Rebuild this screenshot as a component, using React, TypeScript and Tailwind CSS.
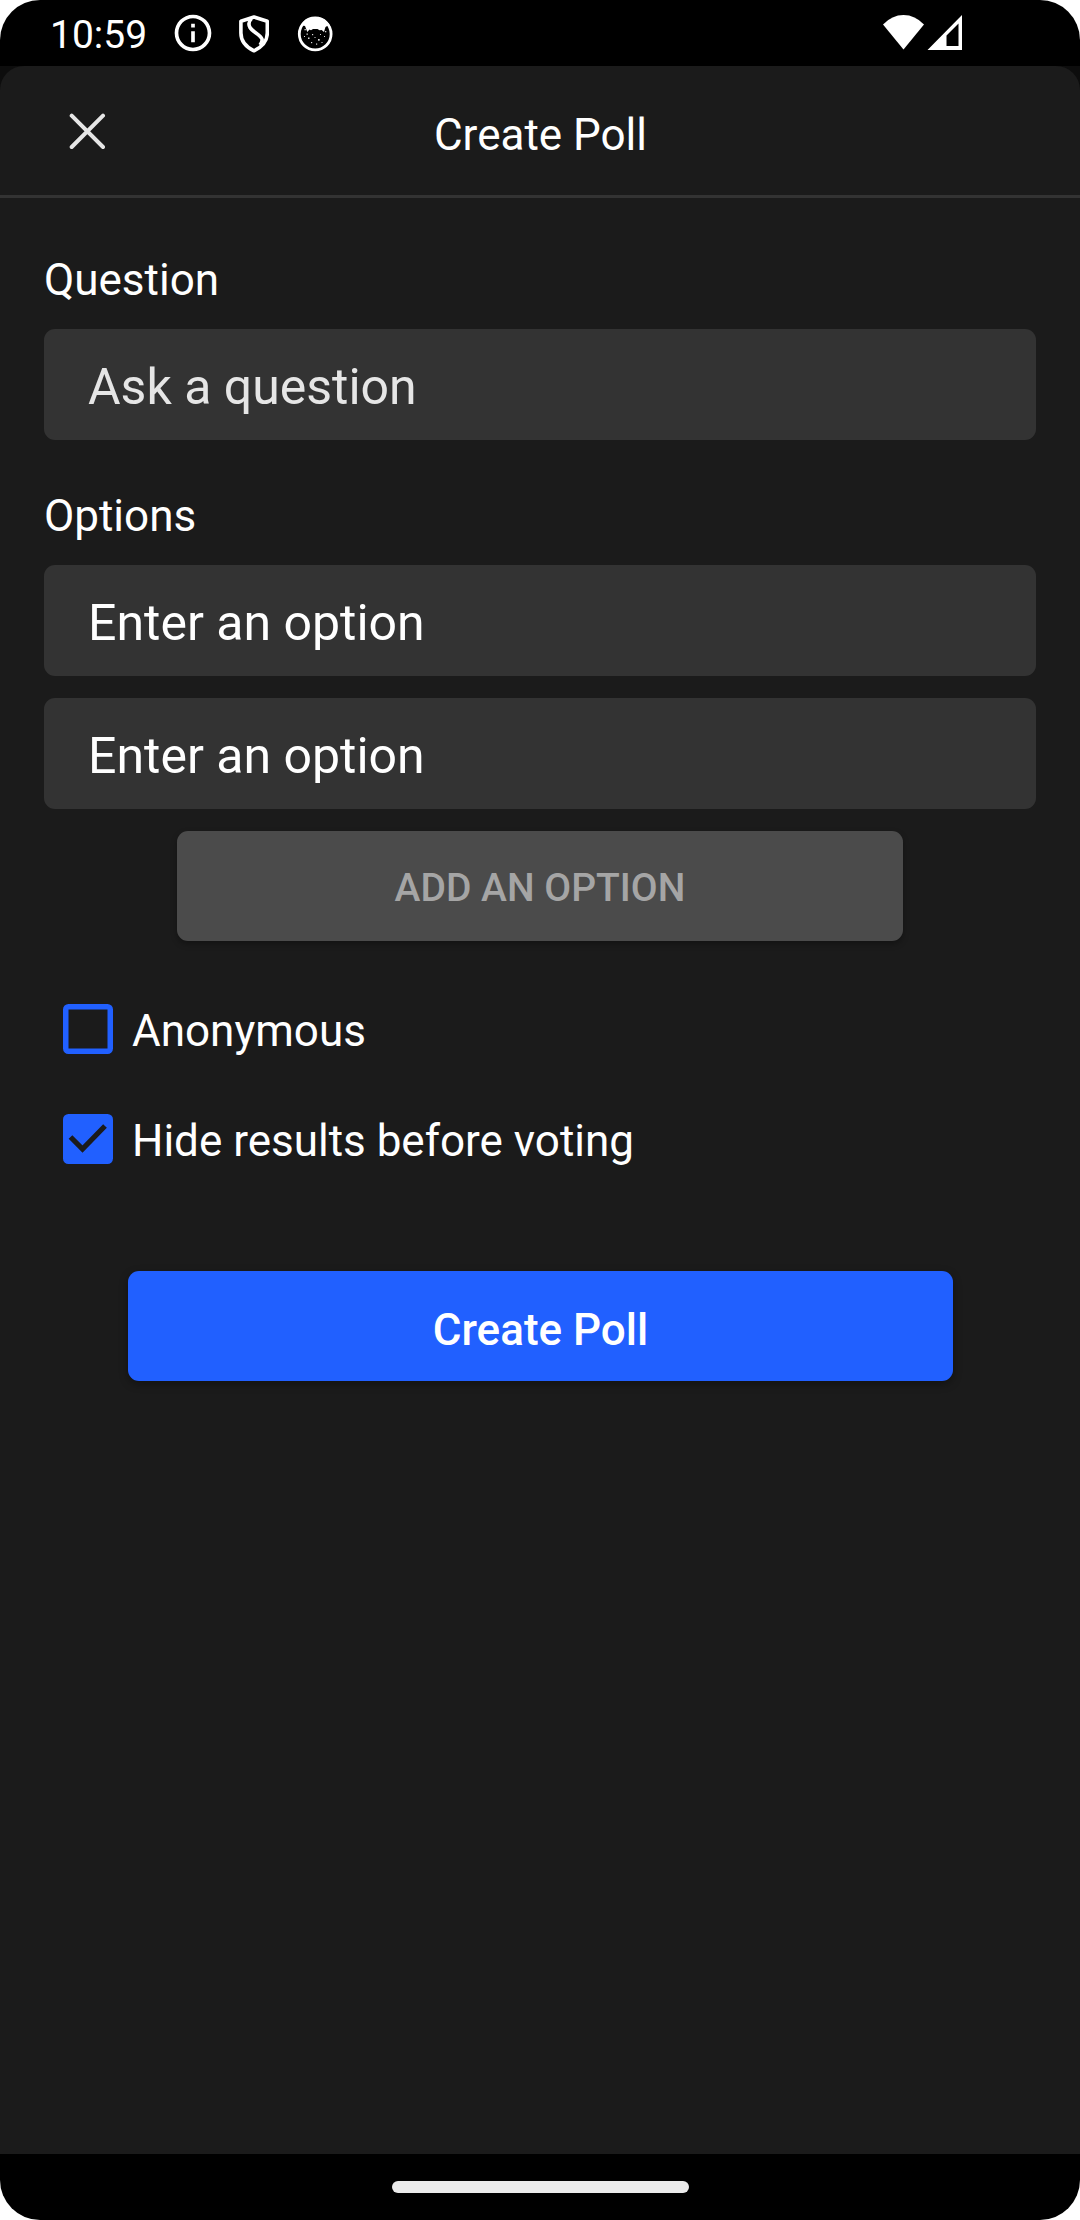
import { useState } from 'react';

function InfoIcon() {
  return (
    <svg width="44" height="44" viewBox="0 0 24 24" fill="#fff">
      <path d="M11 7h2v2h-2zm0 4h2v6h-2zm1-9C6.48 2 2 6.48 2 12s4.48 10 10 10 10-4.48 10-10S17.52 2 12 2zm0 18c-4.41 0-8-3.59-8-8s3.59-8 8-8 8 3.59 8 8-3.59 8-8 8z" />
    </svg>
  );
}

function ShieldIcon() {
  return (
    <svg width="30" height="38" viewBox="0 0 30 38" fill="none" stroke="#fff" strokeLinejoin="round">
      <path d="M15 2 L28.300 6.300 V18 C28.300 26 23 32 15 35.800 C7 32 1.900 26 1.900 18 V6.300 Z" strokeWidth="3.6" />
      <path d="M12.500 3.500 C10 6 9.300 9.500 11 12.500 C13.500 17 21.500 19.500 23 24 C23.500 26 22.500 28 21 30" strokeWidth="3.6" />
    </svg>
  );
}

function CatIcon() {
  return (
    <svg width="36" height="36" viewBox="0 0 36 36" fill="#fff">
      <circle cx="18.200" cy="17.900" r="15.900" fill="none" stroke="#fff" strokeWidth="2.800" />
      <path d="M3 11 C6 4 12 1 18 1 C24 1 31 4 33.500 11 L31 9.500 L28.500 11 L28 12.500 L27 16 L24.700 14 L22.500 14.300 L20.500 13 L16 13 L14 14.300 L12.500 13.600 L10.300 16 L9 12.500 L8 10 L5.700 9.500 Z" />
      <g opacity="0.85">
        <rect x="7.500" y="13" width="1.300" height="1.300" />
        <rect x="9.500" y="17.500" width="1.300" height="1.300" />
        <rect x="7" y="20" width="1" height="1" />
        <rect x="11" y="21.500" width="1.500" height="1.500" />
        <rect x="15" y="18" width="1.200" height="1.200" />
        <rect x="17.500" y="21" width="1" height="1" />
        <rect x="21" y="23" width="1.700" height="1.700" />
        <rect x="23" y="18" width="1" height="1" />
        <rect x="28" y="15" width="1.300" height="1.300" />
        <rect x="27" y="20" width="1" height="1" />
        <rect x="14" y="26" width="1.200" height="1.200" />
        <rect x="19" y="27.500" width="1.200" height="1.200" />
        <rect x="24.500" y="26" width="1" height="1" />
      </g>
    </svg>
  );
}

function StatusBar() {
  return (
    <div className="flex h-[66px] shrink-0 items-start pl-[50px] pr-[117px]">
      <span className="mt-3 w-[121px] text-[39px] leading-[46px]">10:59</span>
      <div className="mt-[11px]">
        <InfoIcon />
      </div>
      <div className="ml-6 mt-[14.500px]">
        <ShieldIcon />
      </div>
      <div className="ml-7 mt-[15.500px]">
        <CatIcon />
      </div>
      <svg className="ml-auto mt-[15px]" width="80" height="35" viewBox="0 0 80 35" fill="#fff">
        <path d="M0 9.500 Q9 0 20.500 0 Q32 0 41 9.500 L20.500 34.500 Z" />
        <path
          fillRule="evenodd"
          d="M44.500 35 L79 0 V35 Z M63.500 31 H75.500 V8.500 L63.500 20.500 Z"
        />
      </svg>
    </div>
  );
}

function Header() {
  return (
    <header className="grid h-[132px] grid-cols-[160px_1fr_160px] items-start border-b-[3px] border-[#333333]">
      <button aria-label="Close" className="ml-[69px] mt-[47px] w-9">
        <svg width="37" height="37" viewBox="0 0 37 37" stroke="#e6e6e6" strokeWidth="4" strokeLinecap="round">
          <path d="M2.700 2.700 L34 34 M34 2.700 L2.700 34" />
        </svg>
      </button>
      <h1 className="mt-[43px] pl-px text-center text-[44px] leading-[52px]">Create Poll</h1>
    </header>
  );
}

function Field({ placeholder, muted }: { placeholder: string; muted?: boolean }) {
  return (
    <div
      className={`flex h-[111px] items-center rounded-[11px] bg-[#333333] px-11 pt-[5px] text-[50px] leading-[58px] ${
        muted ? 'text-[#e6e6e6]' : 'text-white'
      }`}
    >
      {placeholder}
    </div>
  );
}

function CheckRow({ label, initial }: { label: string; initial: boolean }) {
  const [on, setOn] = useState(initial);
  return (
    <button
      role="checkbox"
      aria-checked={on}
      onClick={() => setOn(!on)}
      className="flex h-[110px] items-center pl-[19px] text-left"
    >
      <svg width="50" height="50" viewBox="0 0 50 50">
        {on ? (
          <>
            <rect width="50" height="50" rx="5.500" fill="#2160ff" />
            <path d="M7.500 23 L19.500 35 L42 12" fill="none" stroke="#1b1b1b" strokeWidth="5.200" />
          </>
        ) : (
          <rect x="2.750" y="2.750" width="44.500" height="44.500" rx="2.750" fill="none" stroke="#2160ff" strokeWidth="5.500" />
        )}
      </svg>
      <span className="ml-[19px] mt-1 text-[44px] leading-[52px]">{label}</span>
    </button>
  );
}

export default function App() {
  return (
    <div className="h-[2220px] w-[1080px] bg-white">
      <div className="flex h-full flex-col overflow-hidden rounded-[40px] bg-black font-['Roboto',sans-serif] text-white">
        <StatusBar />
        <div className="flex-1 bg-[#0d0d0d]">
          <div className="h-full rounded-t-[24px] bg-[#1b1b1b]">
            <Header />
            <main className="flex flex-col px-11 pt-14">
              <h2 className="text-[44px] leading-[52px]">Question</h2>
              <div className="mt-[23px]">
                <Field placeholder="Ask a question" muted />
              </div>
              <h2 className="mt-[50px] text-[44px] leading-[52px]">Options</h2>
              <div className="mt-[23px] flex flex-col gap-[22px]">
                <Field placeholder="Enter an option" />
                <Field placeholder="Enter an option" />
                <button className="ml-[133px] flex h-[110px] w-[726px] items-center justify-center rounded-[11px] bg-[#4b4b4b] pt-1 text-[39px] font-medium leading-[46px] text-[#a5a5a5] shadow-[0_3px_6px_rgba(0,0,0,0.3)]">
                  ADD AN OPTION
                </button>
              </div>
              <div className="mt-[33px] flex flex-col">
                <CheckRow label="Anonymous" initial={false} />
                <CheckRow label="Hide results before voting" initial={true} />
              </div>
              <button className="ml-[84px] mt-[77px] flex h-[110px] w-[825px] items-center justify-center rounded-[11px] bg-[#2160ff] pt-2 text-[44px] font-medium leading-[52px] shadow-[0_3px_8px_rgba(0,0,0,0.35)]">
                Create Poll
              </button>
            </main>
          </div>
        </div>
        <div className="flex h-[66px] shrink-0 justify-center pt-[27px]">
          <div className="h-3 w-[297px] rounded-full bg-[#ebebeb]" />
        </div>
      </div>
    </div>
  );
}
